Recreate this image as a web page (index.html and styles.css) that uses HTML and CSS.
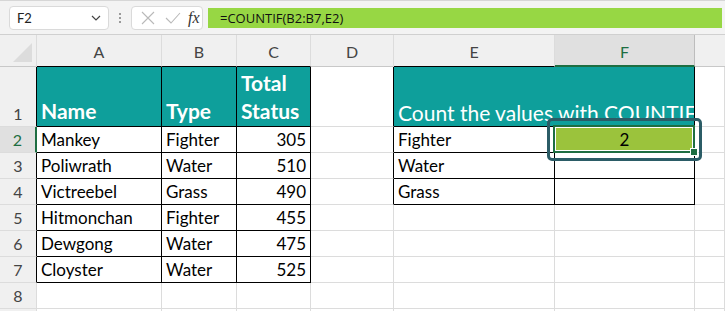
FILE: index.html
```html
<!DOCTYPE html>
<html lang="en">
<head>
  <meta charset="UTF-8" />
  <title>COUNTIF - Sheet</title>
  <link rel="stylesheet" href="styles.css">
</head>
<body>
  <div class="formula-bar">
    <div class="name-box">
      <span>F2</span>
      <svg class="chev" width="10" height="6" viewBox="0 0 10 6"><path d="M1 1l4 4 4-4" fill="none" stroke="#444" stroke-width="1.2"/></svg>
    </div>
    <div class="grip"><i></i><i></i><i></i></div>
    <div class="fx-box">
      <svg width="14" height="14" viewBox="0 0 14 14"><path d="M1 1l12 12M13 1L1 13" stroke="#b9b9b9" stroke-width="1.1"/></svg>
      <svg width="16" height="12" viewBox="0 0 16 12"><path d="M1 6l5 5L15 1" fill="none" stroke="#b9b9b9" stroke-width="1.1"/></svg>
      <span class="fx">fx</span>
    </div>
    <div class="formula">=COUNTIF(B2:B7,E2)</div>
  </div>

  <div class="sheet">
    <div class="corner"><span class="tri"></span></div>
    <div class="col-head">A</div>
    <div class="col-head">B</div>
    <div class="col-head">C</div>
    <div class="col-head">D</div>
    <div class="col-head">E</div>
    <div class="col-head active">F</div>
    <div class="col-head last"></div>

    <div class="row-head tb">1</div>
    <div class="cell head tb">Name</div>
    <div class="cell head tb">Type</div>
    <div class="cell head tb wrap">Total<br>Status</div>
    <div class="cell edge"></div>
    <div class="cell title tb">Count the values with COUNTIF</div>
    <div class="cell"></div>

    <div class="row-head active tb">2</div>
    <div class="cell tb">Mankey</div>
    <div class="cell tb">Fighter</div>
    <div class="cell tb num">305</div>
    <div class="cell edge"></div>
    <div class="cell tb">Fighter</div>
    <div class="cell tb selected">
      2
      <span class="sel-border"></span>
      <span class="handle"></span>
      <span class="ring"></span>
    </div>
    <div class="cell"></div>

    <div class="row-head tb">3</div>
    <div class="cell tb">Poliwrath</div>
    <div class="cell tb">Water</div>
    <div class="cell tb num">510</div>
    <div class="cell edge"></div>
    <div class="cell tb">Water</div>
    <div class="cell tb"></div>
    <div class="cell"></div>

    <div class="row-head tb">4</div>
    <div class="cell tb">Victreebel</div>
    <div class="cell tb">Grass</div>
    <div class="cell tb num">490</div>
    <div class="cell edge"></div>
    <div class="cell tb">Grass</div>
    <div class="cell tb"></div>
    <div class="cell"></div>

    <div class="row-head tb">5</div>
    <div class="cell tb">Hitmonchan</div>
    <div class="cell tb">Fighter</div>
    <div class="cell tb num">455</div>
    <div class="cell"></div>
    <div class="cell"></div>
    <div class="cell"></div>
    <div class="cell"></div>

    <div class="row-head tb">6</div>
    <div class="cell tb">Dewgong</div>
    <div class="cell tb">Water</div>
    <div class="cell tb num">475</div>
    <div class="cell"></div>
    <div class="cell"></div>
    <div class="cell"></div>
    <div class="cell"></div>

    <div class="row-head tb">7</div>
    <div class="cell tb">Cloyster</div>
    <div class="cell tb">Water</div>
    <div class="cell tb num">525</div>
    <div class="cell"></div>
    <div class="cell"></div>
    <div class="cell"></div>
    <div class="cell"></div>

    <div class="row-head">8</div>
    <div class="cell"></div>
    <div class="cell"></div>
    <div class="cell"></div>
    <div class="cell"></div>
    <div class="cell"></div>
    <div class="cell"></div>
    <div class="cell"></div>

    <div class="row-head"></div>
    <div class="cell"></div>
    <div class="cell"></div>
    <div class="cell"></div>
    <div class="cell"></div>
    <div class="cell"></div>
    <div class="cell"></div>
    <div class="cell"></div>
  </div>
</body>
</html>
```

FILE: styles.css
```css
body {
  margin: 0;
  width: 725px;
  height: 311px;
  overflow: hidden;
  background: #fff;
  font-family: Lato, "Liberation Sans", sans-serif;
  color: #000;
}

/* formula bar */
.formula-bar {
  height: 35px;
  box-sizing: border-box;
  background: #f3f3f3;
  border-top: 1px solid #d6d6d6;
  border-bottom: 1px solid #d0d0d0;
  display: flex;
  align-items: center;
  padding: 0 3px 0 9px;
}

.name-box {
  width: 100px;
  height: 24px;
  box-sizing: border-box;
  background: #fff;
  border: 1px solid #dadada;
  border-radius: 4px;
  display: flex;
  align-items: center;
  justify-content: space-between;
  padding: 0 7px 0 7px;
  font-size: 13px;
  color: #222;
}

.grip {
  width: 22px;
  display: flex;
  flex-direction: column;
  align-items: center;
  gap: 2px;
}

.grip i {
  width: 2px;
  height: 2px;
  background: #9a9a9a;
}

.fx-box {
  width: 72px;
  height: 24px;
  box-sizing: border-box;
  background: #fff;
  border: 1px solid #dadada;
  border-radius: 4px;
  display: flex;
  align-items: center;
  gap: 10px;
  padding: 0 0 0 9px;
}

.fx {
  font-family: "Liberation Serif", serif;
  font-style: italic;
  font-size: 16px;
  color: #333;
  margin-left: -3px;
}

.formula {
  flex: 1;
  margin-left: 5px;
  height: 20px;
  background: #97d744;
  font-family: "Open Sans", sans-serif;
  font-size: 13px;
  line-height: 20px;
  padding-left: 12px;
  color: #111;
}

/* sheet grid */
.sheet {
  display: grid;
  grid-template-columns: 37px 125px 75px 74px 83px 161px 140px 1fr;
  grid-template-rows: 32px 60px repeat(8, 26px);
}

.corner,
.col-head,
.row-head {
  background: #f0f0f0;
  color: #444;
  box-sizing: border-box;
  border-right: 1px solid #dcdcdc;
  border-bottom: 1px solid #c8c8c8;
}

.corner {
  position: relative;
}

.tri {
  position: absolute;
  right: 4px;
  bottom: 4px;
  width: 0;
  height: 0;
  border-left: 19px solid transparent;
  border-bottom: 19px solid #dcdcdc;
}

.col-head {
  display: flex;
  align-items: center;
  justify-content: center;
  font-size: 16px;
  padding-top: 2px;
}

.col-head:nth-child(2),
.col-head:nth-child(3),
.col-head:nth-child(4),
.col-head:nth-child(6) {
  border-bottom-color: #000;
}

.col-head.active {
  background: #e0e0e0;
  color: #1e6e42;
  border-bottom: 2px solid #1e6e42;
  border-right-color: #bdbdbd;
}

.col-head.last {
  border-right: none;
}

.row-head {
  display: flex;
  align-items: flex-end;
  justify-content: center;
  font-size: 16px;
  padding-bottom: 3px;
  border-bottom-color: #dcdcdc;
}

.row-head.tb {
  border-right-color: #000;
}

.row-head.active {
  background: #e0e0e0;
  color: #1e6e42;
  border-right: 2px solid #1e6e42;
}

.cell {
  box-sizing: border-box;
  border-right: 1px solid #dcdcdc;
  border-bottom: 1px solid #dcdcdc;
  font-size: 17px;
  padding: 0 4px;
  display: flex;
  align-items: flex-end;
  padding-bottom: 2px;
  white-space: nowrap;
}

.cell.tb {
  border-right-color: #000;
  border-bottom-color: #000;
}

.cell.edge {
  border-right-color: #000;
}

.cell.num {
  justify-content: flex-end;
}

.cell.head {
  background: #0e9f9b;
  color: #fff;
  font-weight: bold;
  font-size: 21px;
  line-height: 28px;
  padding-bottom: 1px;
}

.cell.wrap {
  white-space: normal;
}

.cell.title {
  grid-column: span 2;
  background: #0e9f9b;
  color: #fff;
  font-size: 21px;
  padding-bottom: 1px;
  overflow: hidden;
}

/* selected cell F2 */
.cell.selected {
  position: relative;
  background: #9bc33c;
  justify-content: center;
}

.sel-border {
  position: absolute;
  left: -2px;
  top: -2px;
  right: -1px;
  bottom: -1px;
  border: 2px solid #1e6e42;
  box-shadow: inset 0 0 0 1px #fff;
}

.handle {
  position: absolute;
  right: -4px;
  bottom: -4px;
  width: 6px;
  height: 6px;
  background: #1e6e42;
  border: 1px solid #fff;
}

.ring {
  position: absolute;
  left: -8px;
  top: -9px;
  right: -8px;
  bottom: -9px;
  border: 3px solid #2b5c66;
  border-radius: 5px;
}
```
